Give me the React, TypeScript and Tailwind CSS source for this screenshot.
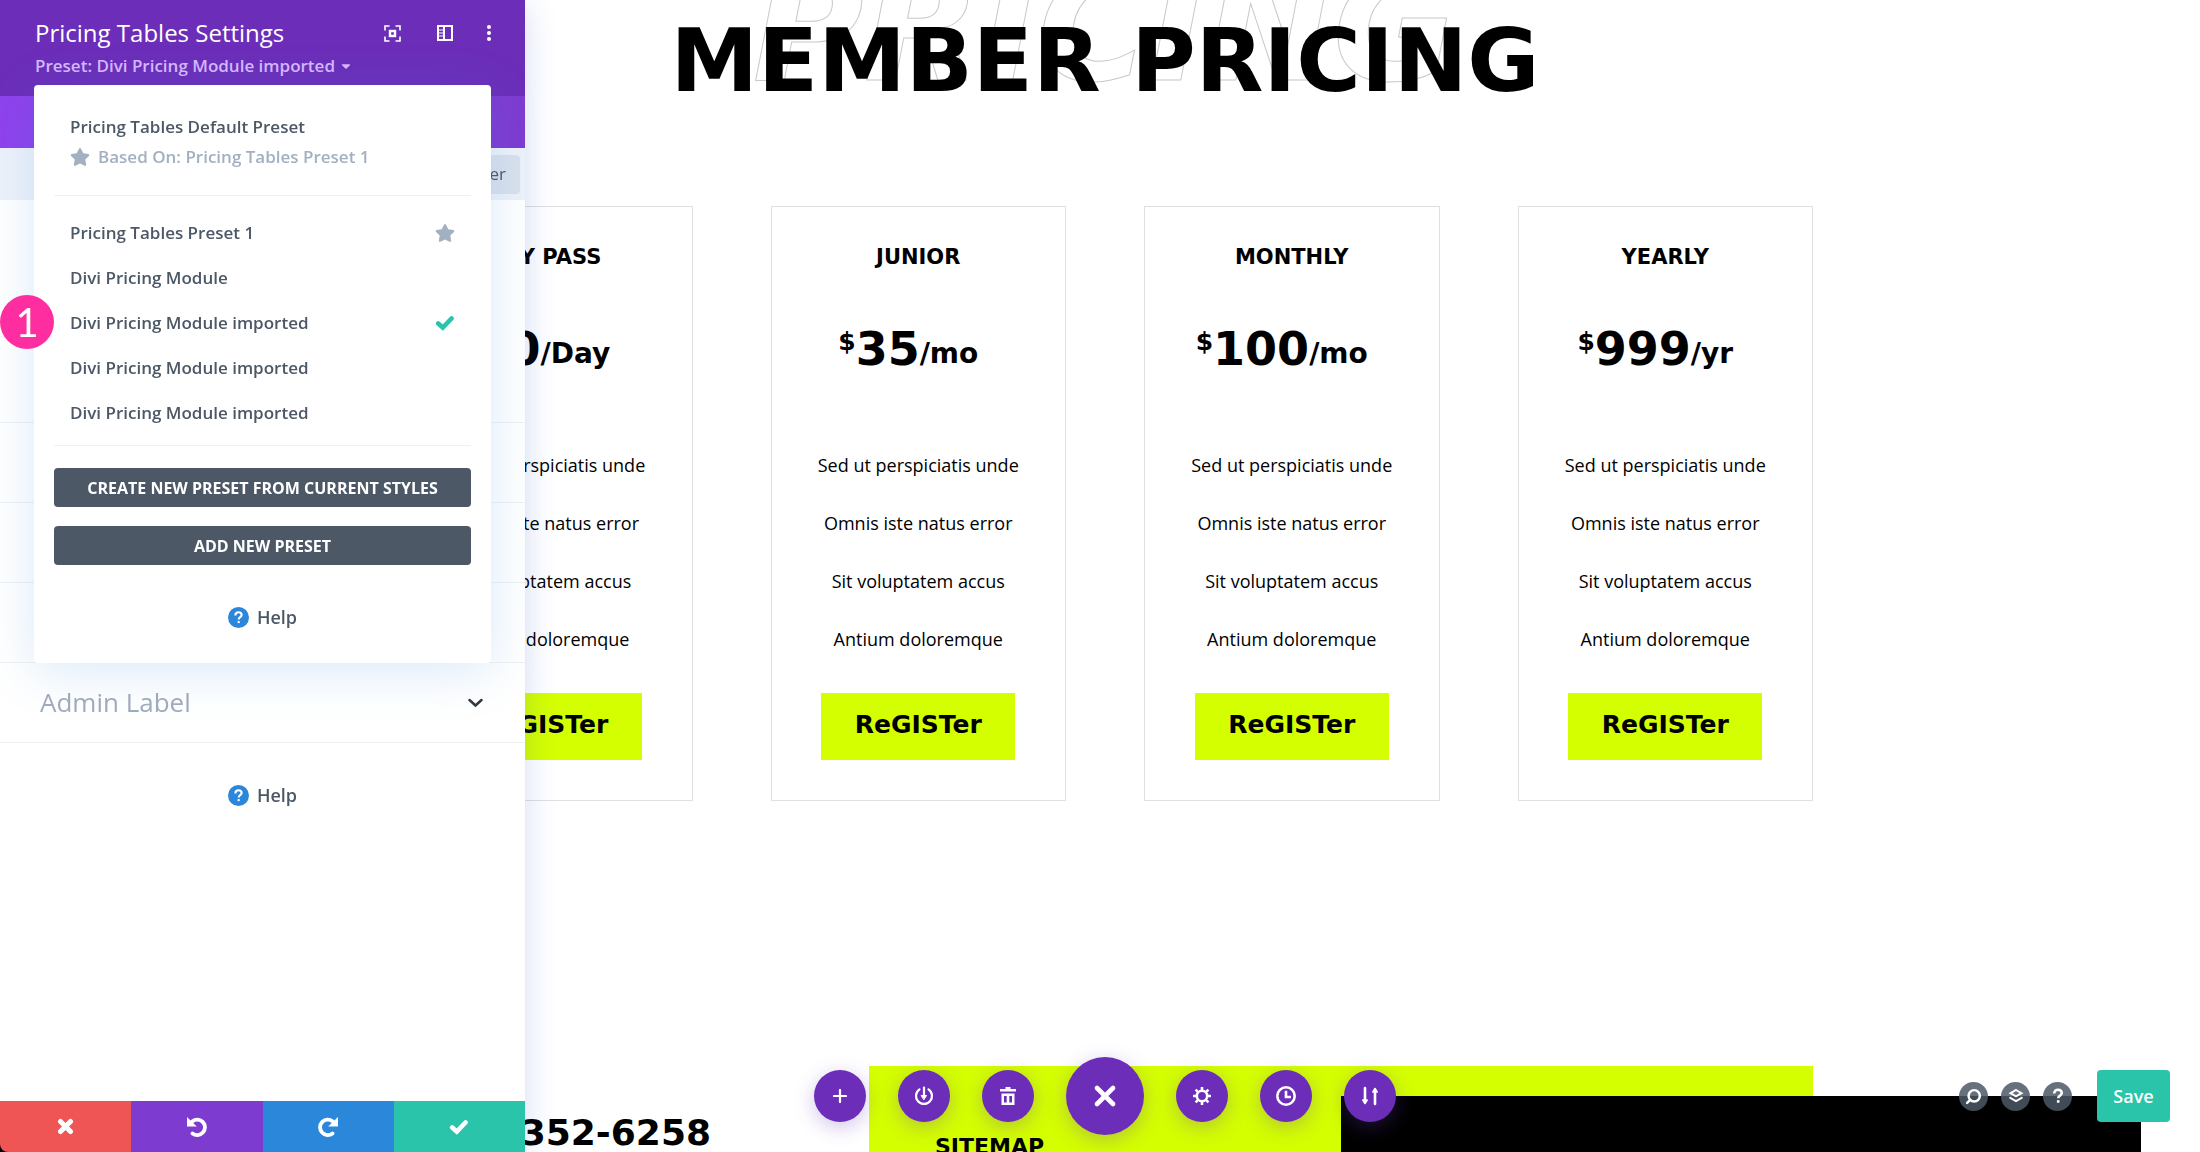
import type { ReactNode } from 'react';
import { Search, X } from 'lucide-react';
import { FaCaretDown, FaStar } from 'react-icons/fa';

const presets = [
  { id: 1, name: 'Pricing Tables Preset 1', starred: true },
  { id: 2, name: 'Divi Pricing Module' },
  { id: 3, name: 'Divi Pricing Module imported', active: true },
  { id: 4, name: 'Divi Pricing Module imported' },
  { id: 5, name: 'Divi Pricing Module imported' },
];

const plans = [
  { title: 'DAY PASS', price: '10', period: '/Day' },
  { title: 'JUNIOR', price: '35', period: '/mo' },
  { title: 'MONTHLY', price: '100', period: '/mo' },
  { title: 'YEARLY', price: '999', period: '/yr' },
];

const features = ['Sed ut perspiciatis unde', 'Omnis iste natus error', 'Sit voluptatem accus', 'Antium doloremque'];

function FocusIcon() {
  return (
    <svg width="17" height="17" viewBox="0 0 17 17" fill="none" stroke="currentColor" strokeWidth="1.6">
      <path d="M1 5.500V1h4.500M11.500 1H16v4.500M16 11.500V16h-4.500M5.500 16H1v-4.500" />
      <rect x="6" y="6" width="5" height="5" strokeWidth="2.400" />
    </svg>
  );
}

function DockIcon() {
  return (
    <svg width="16" height="16" viewBox="0 0 16 16" fill="none" stroke="currentColor" strokeWidth="2">
      <rect x="1" y="1" width="14" height="14" />
      <path d="M7 1v14" />
      <path d="M2 5h4M2 8h4M2 11h4" strokeWidth="1" />
    </svg>
  );
}

function DotsIcon() {
  return (
    <svg width="6" height="18" viewBox="0 0 6 18" fill="currentColor">
      <circle cx="3" cy="3" r="2" />
      <circle cx="3" cy="9" r="2" />
      <circle cx="3" cy="15" r="2" />
    </svg>
  );
}

function CrossIcon() {
  return (
    <svg width="17" height="17" viewBox="0 0 17 17" stroke="currentColor" strokeWidth="5" strokeLinecap="round">
      <path d="M3.500 3.500l10 10M13.500 3.500l-10 10" />
    </svg>
  );
}

function CheckIcon() {
  return (
    <svg width="20" height="16" viewBox="0 0 20 16" fill="none" stroke="currentColor" strokeWidth="4.600" strokeLinecap="round">
      <path d="M3.200 8.500l4.600 4L16.500 3.500" />
    </svg>
  );
}

function UndoIcon({ flipped }: { flipped?: boolean }) {
  return (
    <svg width="20" height="20" viewBox="0 0 20 20" className={flipped ? '-scale-x-100' : ''}>
      <path d="M5.500 4.300A7.700 7.700 0 1 1 5.500 16.400" fill="none" stroke="currentColor" strokeWidth="3.800" strokeLinecap="round" />
      <path d="M0 0l9.800 9.500H0z" fill="currentColor" />
    </svg>
  );
}

function QuestionIcon({ size }: { size: number }) {
  return (
    <svg width={size} height={size} viewBox="0 0 20 20" fill="none" stroke="currentColor" strokeWidth="2.800">
      <path d="M5.800 7.200C5.800 4.600 7.600 3 10 3s4.200 1.500 4.200 3.800c0 2.900-4 2.700-4 5.700" />
      <path d="M10.200 14.600v2.900" />
    </svg>
  );
}

function LayersIcon() {
  return (
    <svg width="16" height="16" viewBox="0 0 16 16" fill="none" stroke="currentColor" strokeWidth="2">
      <path d="M8 2l5.500 3.200L8 8.400 2.500 5.200z" />
      <path d="M1.500 9.300L8 13l6.500-3.700" />
    </svg>
  );
}

function PowerIcon() {
  return (
    <svg width="20" height="20" viewBox="0 0 20 20" fill="none" stroke="currentColor" strokeWidth="2.200" strokeLinecap="round">
      <path d="M5.500 3.300a8 8 0 1 0 9 0" />
      <path d="M10 1.500v9" />
      <path d="M7.500 9.500h5L10 13.500z" fill="currentColor" strokeWidth="1" />
    </svg>
  );
}

function TrashIcon() {
  return (
    <svg width="18" height="20" viewBox="0 0 18 20" fill="currentColor">
      <path d="M6.500 1h5v2H17v2.500H1V3h5.500z" />
      <path fillRule="evenodd" d="M2.500 7.500h13V19h-13zM5 10v6.500h2.700V10zM10.300 10v6.500H13V10z" />
    </svg>
  );
}

function GearIcon() {
  return (
    <svg width="20" height="20" viewBox="0 0 20 20" fill="none" stroke="currentColor" strokeWidth="2.600">
      <circle cx="10" cy="10" r="5.200" />
      <path d="M10 1v3M10 16v3M1 10h3M16 10h3M3.600 3.600l2.200 2.200M14.200 14.200l2.200 2.200M3.600 16.400l2.200-2.200M14.200 5.800l2.200-2.200" />
    </svg>
  );
}

// lucide's clock has slanted hands, this one shows three o'clock
function HistoryIcon() {
  return (
    <svg width="22" height="22" viewBox="0 0 22 22" fill="none" stroke="currentColor" strokeWidth="2.600">
      <circle cx="11" cy="11" r="8.700" />
      <path d="M11 5.800V12h5" />
    </svg>
  );
}

function SortIcon() {
  return (
    <svg width="20" height="20" viewBox="0 0 20 20" fill="currentColor" stroke="currentColor" strokeWidth="2.600" strokeLinejoin="round">
      <path d="M5 2v14M15 18V4" strokeLinecap="round" />
      <path d="M2.800 14h4.400L5 17.500zM12.800 6h4.400L15 2.500z" strokeWidth="1.500" />
    </svg>
  );
}

function HelpLink() {
  return (
    <a href="#help" className="flex items-center justify-center gap-2 text-[18px] leading-[30px] font-semibold text-[#4c5866]">
      <span className="flex size-[21px] items-center justify-center rounded-full bg-[#2b87da] text-white">
        <QuestionIcon size={15} />
      </span>
      Help
    </a>
  );
}

function PresetMenu() {
  return (
    <div className="absolute top-[85px] right-[34px] left-[34px] z-10 rounded-[4px] bg-white px-5 pt-[27px] pb-[31px] shadow-[0_8px_50px_rgba(43,135,218,0.18)]">
      <div className="px-4 text-[17px] leading-[30px] font-semibold">
        <p className="text-[#4c5866]">Pricing Tables Default Preset</p>
        <p className="flex items-center gap-2 text-[#a2b0c1]">
          <FaStar className="w-5 text-[18px]" />
          Based On: Pricing Tables Preset 1
        </p>
      </div>
      <hr className="mt-[23px] border-[#eef1f4]" />
      <ul className="mt-3.5 px-4">
        {presets.map((p) => (
          <li key={p.id}>
            <button className="flex h-[45px] w-full items-center justify-between text-[17px] font-semibold text-[#4c5866]">
              {p.name}
              {p.starred && <FaStar className="w-5 text-[18px] text-[#a2b0c1]" />}
              {p.active && <span className="text-[#29c4a9]"><CheckIcon /></span>}
            </button>
          </li>
        ))}
      </ul>
      <hr className="mt-2.5 border-[#eef1f4]" />
      <div className="mt-[22px] mb-[37px] flex flex-col gap-[19px]">
        <button className="h-[39px] rounded-[4px] bg-[#4c5866] text-[16px] font-bold text-white">
          CREATE NEW PRESET FROM CURRENT STYLES
        </button>
        <button className="h-[39px] rounded-[4px] bg-[#4c5866] text-[16px] font-bold text-white">ADD NEW PRESET</button>
      </div>
      <HelpLink />
    </div>
  );
}

function SettingsPanel() {
  return (
    <aside className="fixed inset-y-0 left-0 z-20 flex w-[525px] flex-col bg-white shadow-[0_5px_30px_rgba(43,80,200,0.2)]">
      <header className="h-24 bg-[#6c2eb9] pt-4 pr-[33px] pl-[35px] text-white">
        <div className="flex h-[34px] items-center">
          <h2 className="flex-1 text-[24px] font-medium">Pricing Tables Settings</h2>
          <button aria-label="Expand" className="mr-9"><FocusIcon /></button>
          <button aria-label="Dock" className="mr-[33px]"><DockIcon /></button>
          <button aria-label="More"><DotsIcon /></button>
        </div>
        <button className="flex h-8 items-center gap-1 text-[17px] font-semibold text-[#d9b8ff]">
          Preset: Divi Pricing Module imported
          <FaCaretDown className="text-[14px]" />
        </button>
      </header>
      <div className="h-[52px] bg-linear-to-r from-[#8f42ec] to-[#7e3bd0]" />
      <div className="flex h-[52px] items-center justify-end bg-[#eef2fa] pr-[5px]">
        <button className="h-[39px] rounded-[4px] bg-[#dae1ec] px-3.5 text-[17px] font-medium text-[#4c5866]">+ Filter</button>
      </div>
      <div className="h-[223px] border-b border-[#eef1f4]" />
      <div className="h-20 border-b border-[#eef1f4]" />
      <div className="h-20 border-b border-[#eef1f4]" />
      <div className="h-20 border-b border-[#eef1f4]" />
      <button className="flex h-20 items-center justify-between border-b border-[#eef1f4] pr-[42px] pl-10 text-[26px] text-[#a2acbb]">
        Admin Label
        <svg width="15" height="10" viewBox="0 0 15 10" fill="none" stroke="#32373c" strokeWidth="2.500" strokeLinecap="round">
          <path d="M1.500 2l6 5.500 6-5.500" />
        </svg>
      </button>
      <div className="mt-[37px] flex-1">
        <HelpLink />
      </div>
      <PresetMenu />
      <span className="absolute top-[295px] left-0 z-20 flex size-[54px] items-center justify-center rounded-full bg-[#ff2ea0] font-['Lato'] text-[40px] text-white">
        1
      </span>
      <footer className="grid h-[51px] grid-cols-4 bg-black text-white *:flex *:items-center *:justify-center">
        <button aria-label="Discard" className="rounded-bl-[8px] bg-[#ef5555]"><CrossIcon /></button>
        <button aria-label="Undo" className="bg-[#7e3bd0]"><UndoIcon /></button>
        <button aria-label="Redo" className="bg-[#2b87da]"><UndoIcon flipped /></button>
        <button aria-label="Save changes" className="bg-[#29c4a9]"><CheckIcon /></button>
      </footer>
    </aside>
  );
}

function PlanCard({ title, price, period }: { title: string; price: string; period: string }) {
  return (
    <article className="flex flex-col items-center border border-[#dfe0e3] pt-9 pb-10 text-black">
      <h2 className="font-['DejaVu_Sans'] text-[21px] leading-[28px] font-bold">{title}</h2>
      <p className="mt-12 flex h-[60px] items-center pr-5 font-['DejaVu_Sans'] font-bold">
        <span className="self-start pt-1 text-[25px]">$</span>
        <span className="text-[46px]">{price}</span>
        <span className="self-end pb-1 text-[28px]">{period}</span>
      </p>
      <ul className="mt-[57px] text-center text-[18px] leading-[58px]">
        {features.map((f) => (
          <li key={f}>{f}</li>
        ))}
      </ul>
      <a href="#register" className="mt-[25px] flex h-[67px] w-[194px] justify-center bg-[#d4ff00] font-['DejaVu_Sans'] text-[25px] leading-[64px] font-bold">
        ReGISTer
      </a>
    </article>
  );
}

function RoundButton({ label, large, children }: { label: string; large?: boolean; children: ReactNode }) {
  return (
    <button
      aria-label={label}
      className={`flex items-center justify-center rounded-full bg-[#6c2eb9] text-white shadow-[0_5px_20px_rgba(103,58,183,0.3)] ${large ? 'size-[78px]' : 'size-[52px]'}`}
    >
      {children}
    </button>
  );
}

function BuilderBar() {
  return (
    <>
      <div className="fixed inset-x-0 bottom-[17px] z-10 flex items-center justify-center gap-8 pl-2.5">
        <RoundButton label="Add">
          <svg width="14" height="14" viewBox="0 0 14 14" stroke="currentColor" strokeWidth="2.200" strokeLinecap="round">
            <path d="M7 1v12M1 7h12" />
          </svg>
        </RoundButton>
        <RoundButton label="Save to library"><PowerIcon /></RoundButton>
        <RoundButton label="Clear layout"><TrashIcon /></RoundButton>
        <RoundButton label="Close" large><X size={32} strokeWidth={3.5} /></RoundButton>
        <RoundButton label="Page settings"><GearIcon /></RoundButton>
        <RoundButton label="History"><HistoryIcon /></RoundButton>
        <RoundButton label="Portability"><SortIcon /></RoundButton>
      </div>
      <div className="fixed right-[30px] bottom-[30px] z-10 flex items-center gap-[13px] text-white *:flex *:items-center *:justify-center">
        <button aria-label="Search" className="size-[29px] rounded-full bg-[#4c5866]/85"><Search size={17} strokeWidth={3.5} className="-scale-x-100" /></button>
        <button aria-label="Layers" className="size-[29px] rounded-full bg-[#4c5866]/85"><LayersIcon /></button>
        <button aria-label="Help" className="size-[29px] rounded-full bg-[#4c5866]/85"><QuestionIcon size={18} /></button>
        <button className="ml-3 h-[52px] w-[73px] rounded-[4px] bg-[#29c4a9] text-[18px] font-semibold">Save</button>
      </div>
    </>
  );
}

export default function App() {
  return (
    <div className="relative h-screen overflow-hidden bg-white font-['Open_Sans',sans-serif]">
      <main className="pl-2.5">
        <header className="relative mb-[84px] text-center font-['DejaVu_Sans'] font-bold whitespace-nowrap">
          <div
            aria-hidden="true"
            className="absolute inset-x-0 -top-[52px] text-[152px] leading-[160px] text-transparent italic [-webkit-text-stroke:1px_#c9c9c9]"
          >
            PRICING
          </div>
          <h1 className="relative text-[88px] leading-[122px] text-black">MEMBER PRICING</h1>
        </header>
        <section className="mx-auto grid max-w-[1416px] grid-cols-4 gap-[78px]">
          {plans.map((p) => (
            <PlanCard key={p.title} {...p} />
          ))}
        </section>
      </main>
      <footer className="mt-[265px] grid grid-cols-[1fr_minmax(0,1416px)_1fr] pl-2.5 font-['DejaVu_Sans'] font-bold text-black">
        <div className="col-start-2 grid grid-cols-3">
          <p className="pt-12 pr-[158px] text-right text-[36px] leading-[38px] whitespace-nowrap">(255) 352-6258</p>
          <div className="bg-[#d4ff00] pt-[66px] pl-[66px] text-[22px] leading-[30px]">SITEMAP</div>
          <div className="bg-[#d4ff00] pt-[30px]">
            <div className="h-full bg-black" />
          </div>
        </div>
        <div className="pt-[30px] pr-[59px]">
          <div className="h-full bg-black" />
        </div>
      </footer>
      <BuilderBar />
      <SettingsPanel />
    </div>
  );
}
